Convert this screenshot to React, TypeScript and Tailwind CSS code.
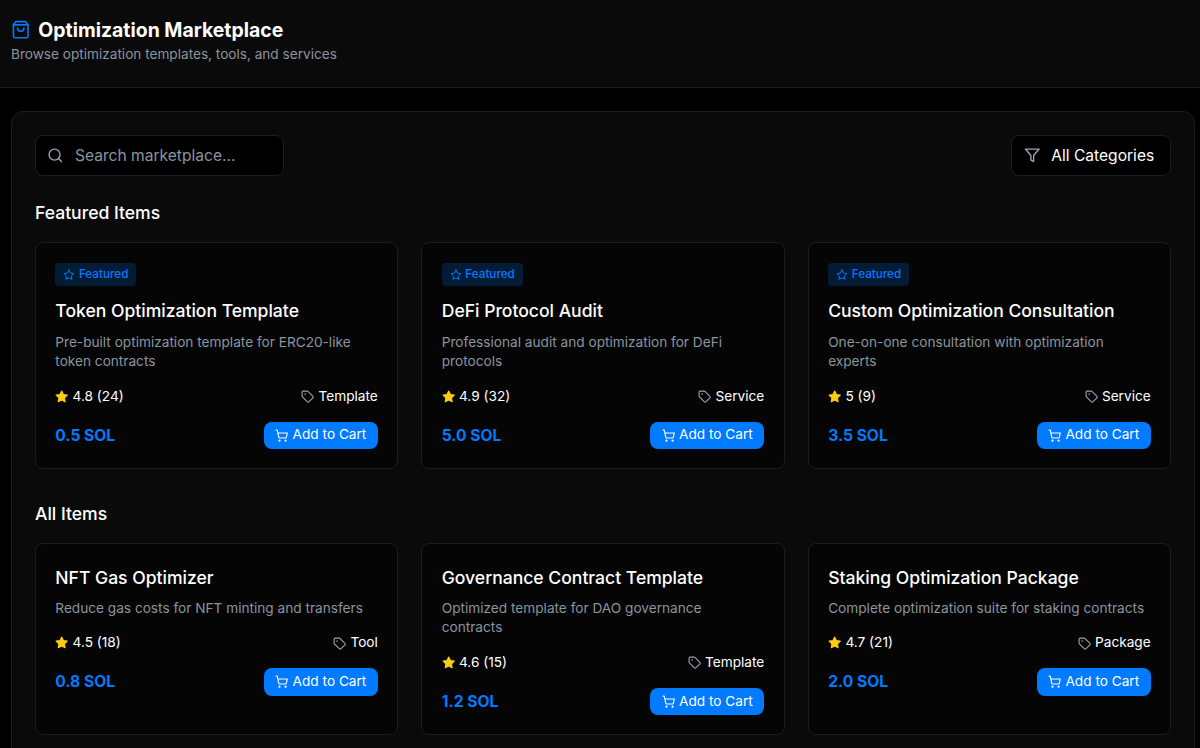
import type { ReactNode } from "react";

type IconProps = { className: string; children: ReactNode };

function Icon({ className, children }: IconProps) {
  return (
    <svg
      viewBox="0 0 24 24"
      fill="none"
      stroke="currentColor"
      strokeWidth="2"
      strokeLinecap="round"
      strokeLinejoin="round"
      className={"shrink-0 " + className}
    >
      {children}
    </svg>
  );
}

const star = (
  <polygon points="12 2 15.09 8.26 22 9.27 17 14.14 18.18 21.02 12 17.77 5.82 21.02 7 14.14 2 9.27 8.91 8.26 12 2" />
);

type Item = {
  title: string;
  description: string;
  rating: string;
  category: string;
  price: string;
};

const featured: Item[] = [
  {
    title: "Token Optimization Template",
    description: "Pre-built optimization template for ERC20-like token contracts",
    rating: "4.8 (24)",
    category: "Template",
    price: "0.5 SOL",
  },
  {
    title: "DeFi Protocol Audit",
    description: "Professional audit and optimization for DeFi protocols",
    rating: "4.9 (32)",
    category: "Service",
    price: "5.0 SOL",
  },
  {
    title: "Custom Optimization Consultation",
    description: "One-on-one consultation with optimization experts",
    rating: "5 (9)",
    category: "Service",
    price: "3.5 SOL",
  },
];

const items: Item[] = [
  {
    title: "NFT Gas Optimizer",
    description: "Reduce gas costs for NFT minting and transfers",
    rating: "4.5 (18)",
    category: "Tool",
    price: "0.8 SOL",
  },
  {
    title: "Governance Contract Template",
    description: "Optimized template for DAO governance contracts",
    rating: "4.6 (15)",
    category: "Template",
    price: "1.2 SOL",
  },
  {
    title: "Staking Optimization Package",
    description: "Complete optimization suite for staking contracts",
    rating: "4.7 (21)",
    category: "Package",
    price: "2.0 SOL",
  },
];

function Card({ item, badge }: { item: Item; badge?: boolean }) {
  return (
    <article className="rounded-[8px] border border-[#181d24] bg-[#050505] px-[19.3px] pt-[19.5px] pb-[18.5px]">
      {badge && (
        <div className="mb-[11.2px] flex h-[23.4px] w-fit items-center gap-[3.9px] rounded-[4px] bg-[#031c36] px-[7.9px] text-[11.7px] font-medium text-[#007aff]">
          <Icon className="size-[11.8px]">{star}</Icon>
          Featured
        </div>
      )}
      <h3 className="mb-[8.2px] text-[17.56px] leading-[27px] font-medium text-white">{item.title}</h3>
      <p className="mb-[14.9px] text-[13.65px] leading-[19.7px] text-[#8b949e]">{item.description}</p>
      <div className="mb-[15px] flex items-center justify-between text-[13.65px] leading-[19.7px] text-white">
        <div className="flex items-center">
          <Icon className="mr-[3.9px] size-[13.4px] fill-[#facc15] text-[#facc15]">{star}</Icon>
          {item.rating}
        </div>
        <div className="flex items-center">
          <Icon className="mr-[4px] size-[13.2px] text-[#9ca3af]">
            <path d="M12.586 2.586A2 2 0 0 0 11.172 2H4a2 2 0 0 0-2 2v7.172a2 2 0 0 0 .586 1.414l8.704 8.704a2.426 2.426 0 0 0 3.42 0l6.58-6.58a2.426 2.426 0 0 0 0-3.42z" />
            <circle cx="7.5" cy="7.5" r=".5" fill="currentColor" />
          </Icon>
          {item.category}
        </div>
      </div>
      <div className="flex items-center justify-between">
        <span className="text-[15.6px] leading-[23.6px] font-bold text-[#007aff]">{item.price}</span>
        <button className="flex h-[27.6px] items-center rounded-[7.9px] bg-[#007aff] px-[11.5px] text-[13.65px] leading-[19.7px] text-white">
          <Icon className="mr-[3.9px] size-[13.4px]">
            <circle cx="8" cy="21" r="1" />
            <circle cx="19" cy="21" r="1" />
            <path d="M2.05 2.05h2l2.66 12.42a2 2 0 0 0 2 1.58h9.78a2 2 0 0 0 1.95-1.57l1.65-7.43H5.12" />
          </Icon>
          Add to Cart
        </button>
      </div>
    </article>
  );
}

function Section({ title, children }: { title: string; children: ReactNode }) {
  return (
    <section>
      <h2 className="mb-[15.1px] text-[17.56px] leading-[27.8px] font-medium text-white">{title}</h2>
      <div className="grid grid-cols-3 gap-[23.3px]">{children}</div>
    </section>
  );
}

export default function App() {
  return (
    <div className="h-[748px] overflow-hidden bg-black font-['Inter',sans-serif]">
      <header className="h-[88px] border-b border-[#1b1e22] bg-[#0a0a0a] pt-[16px] pl-[11px]">
        <h1 className="flex items-center gap-[7.9px] text-[19.46px] leading-[28px] font-bold text-white">
          <Icon className="size-[19.4px] text-[#007aff]">
            <path d="M6 2 3 6v14a2 2 0 0 0 2 2h14a2 2 0 0 0 2-2V6l-3-4Z" />
            <path d="M3 6h18" />
            <path d="M16 10a4 4 0 0 1-8 0" />
          </Icon>
          Optimization Marketplace
        </h1>
        <p className="text-[13.62px] leading-[20px] text-[#8b949e]">
          Browse optimization templates, tools, and services
        </p>
      </header>

      <main className="mt-[23px] mr-[5px] ml-[11px] h-[700px] rounded-[12px] border border-[#181d24] bg-[#0a0a0a] pt-[23.4px] pr-[23px] pl-[23px]">
        <div className="mb-[23.4px] flex items-center justify-between">
          <label className="flex h-[40.6px] w-[249px] items-center gap-[11px] rounded-[8px] border border-[#181d24] bg-black px-[11.4px] text-[#9ca3af]">
            <Icon className="size-[16.5px]">
              <circle cx="11" cy="11" r="8" />
              <path d="m21 21-4.3-4.3" />
            </Icon>
            <input
              placeholder="Search marketplace..."
              className="w-full min-w-0 bg-transparent text-[15.6px] leading-[23.6px] text-white outline-none placeholder:text-[#8b949e]"
            />
          </label>
          <button className="flex h-[40.6px] w-[160px] items-center gap-[11px] rounded-[8px] border border-[#181d24] bg-black px-[11.7px] text-[15.6px] leading-[23.6px] whitespace-nowrap text-white">
            <Icon className="size-[16.5px] text-[#9ca3af]">
              <polygon points="22 3 2 3 10 12.46 10 19 14 21 14 12.46 22 3" />
            </Icon>
            All Categories
          </button>
        </div>

        <div className="flex flex-col gap-[31.5px]">
          <Section title="Featured Items">
            {featured.map((item) => (
              <Card key={item.title} item={item} badge />
            ))}
          </Section>
          <Section title="All Items">
            {items.map((item) => (
              <Card key={item.title} item={item} />
            ))}
          </Section>
        </div>
      </main>
    </div>
  );
}
